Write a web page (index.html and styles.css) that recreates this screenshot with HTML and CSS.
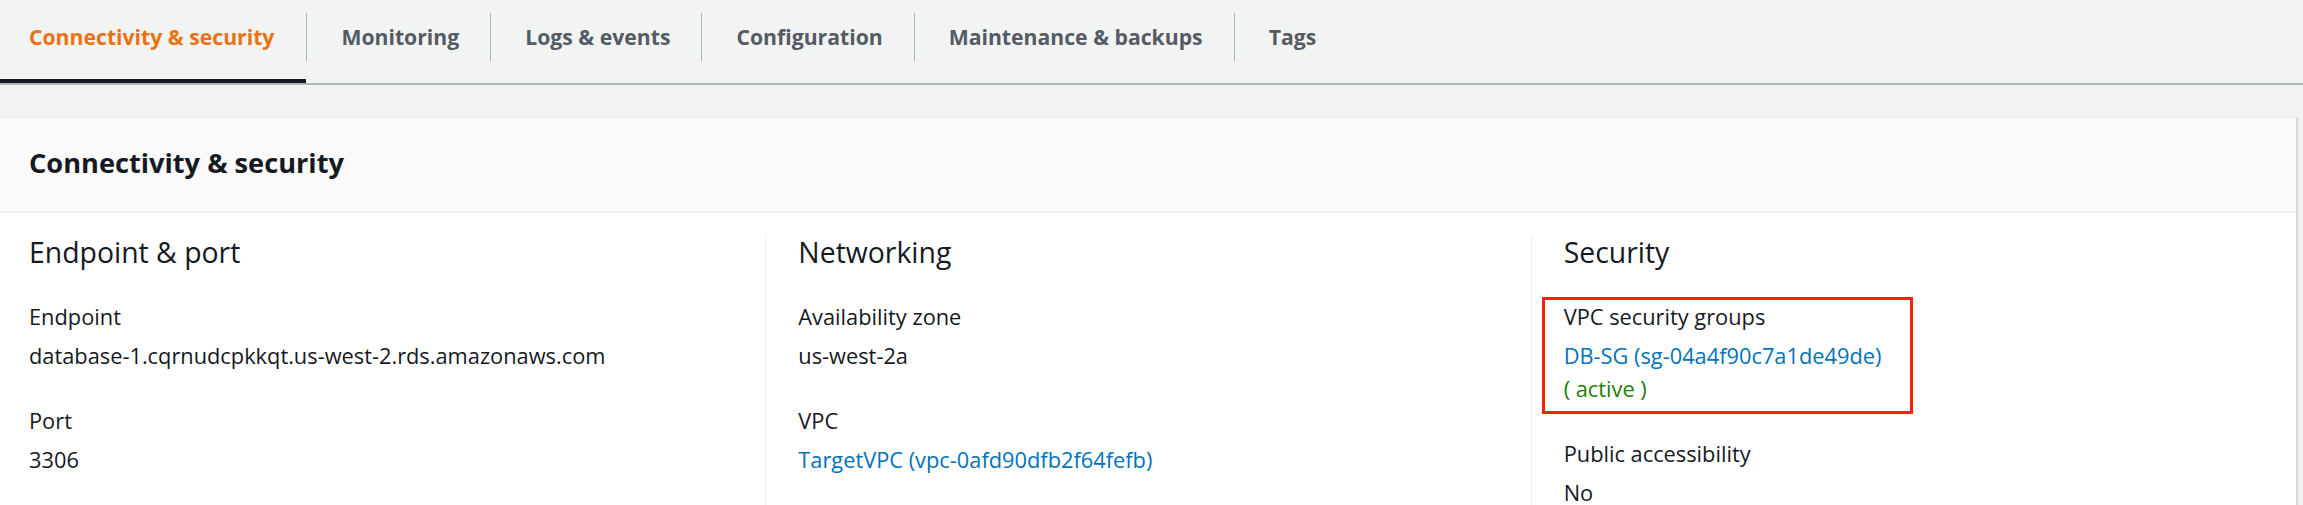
FILE: index.html
```html
<!DOCTYPE html>
<html lang="en">
<head>
<meta charset="utf-8">
<title>Connectivity &amp; security</title>
<link rel="stylesheet" href="styles.css">
</head>
<body>
<nav class="tabs">
  <div class="tab active">Connectivity &amp; security</div>
  <div class="sep"></div>
  <div class="tab">Monitoring</div>
  <div class="sep"></div>
  <div class="tab">Logs &amp; events</div>
  <div class="sep"></div>
  <div class="tab">Configuration</div>
  <div class="sep"></div>
  <div class="tab">Maintenance &amp; backups</div>
  <div class="sep"></div>
  <div class="tab">Tags</div>
</nav>
<section class="card">
  <header class="card-header">Connectivity &amp; security</header>
  <div class="card-body">
    <div class="col first">
      <h3 class="col-title">Endpoint &amp; port</h3>
      <div class="kv">
        <div class="key">Endpoint</div>
        <div class="val">database-1.cqrnudcpkkqt.us-west-2.rds.amazonaws.com</div>
      </div>
      <div class="kv">
        <div class="key">Port</div>
        <div class="val">3306</div>
      </div>
    </div>
    <div class="col">
      <h3 class="col-title">Networking</h3>
      <div class="kv">
        <div class="key">Availability zone</div>
        <div class="val">us-west-2a</div>
      </div>
      <div class="kv">
        <div class="key">VPC</div>
        <div class="val"><a class="link" href="#">TargetVPC (vpc-0afd90dfb2f64fefb)</a></div>
      </div>
    </div>
    <div class="col">
      <h3 class="col-title">Security</h3>
      <div class="kv marked">
        <div class="key">VPC security groups</div>
        <div class="val"><a class="link" href="#">DB-SG (sg-04a4f90c7a1de49de)</a></div>
        <div class="val status">( active )</div>
        <div class="mark"></div>
      </div>
      <div class="kv">
        <div class="key">Public accessibility</div>
        <div class="val">No</div>
      </div>
    </div>
  </div>
</section>
</body>
</html>
```
FILE: styles.css
```css
html, body {
  margin: 0;
  padding: 0;
  background: #f2f3f3;
  font-family: "Open Sans", "Noto Sans", sans-serif;
  color: #16191f;
  overflow: hidden;
}

.tabs {
  display: flex;
  align-items: flex-start;
  height: 83px;
  border-bottom: 2px solid #aab7b8;
}

.tab {
  height: 83px;
  box-sizing: border-box;
  padding: 22px 31px 31px 34px;
  font-size: 21.2px;
  line-height: 30px;
  font-weight: 700;
  color: #545b64;
  white-space: nowrap;
}

.tab.active {
  padding-left: 29px;
  padding-right: 32px;
  color: #ec7211;
  box-shadow: inset 0 -4px 0 #16191f;
}

.sep {
  width: 1px;
  height: 48px;
  margin-top: 13px;
  background: #aab7b8;
}

.card {
  margin: 32px 6px 0 0;
  background: #fff;
  border-top: 1px solid #eaeded;
  border-right: 1px solid #d5dbdb;
  box-shadow: 1px 1px 1px 0 rgba(0, 28, 36, 0.12);
}

.card-header {
  background: #fafafa;
  border-bottom: 2px solid #eaeded;
  padding: 27px 29px 30px;
  font-size: 27.2px;
  line-height: 36px;
  font-weight: 700;
}

.card-body {
  display: grid;
  grid-template-columns: 1fr 1fr 1fr;
  padding-top: 23px;
  height: 300px;
}

.col {
  border-left: 1px solid #eaeded;
  padding-left: 32px;
}

.col.first {
  border-left: none;
  padding-left: 29px;
}

.col-title {
  margin: 0 0 32px;
  font-size: 28.4px;
  line-height: 32px;
  font-weight: 400;
}

.kv {
  margin-bottom: 32px;
  font-size: 21.8px;
  line-height: 33px;
}

.key {
  margin-bottom: 6px;
}

.link {
  color: #0073bb;
  text-decoration: none;
}

.status {
  color: #1d8102;
}

.marked {
  position: relative;
}

.mark {
  position: absolute;
  left: -22px;
  top: -3px;
  width: 371px;
  height: 117px;
  box-sizing: border-box;
  border: 3px solid #f5230e;
}
```
